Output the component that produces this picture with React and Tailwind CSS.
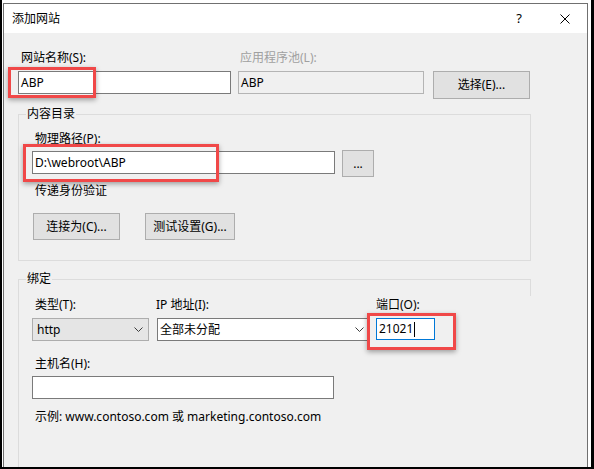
import React from 'react';

const FONT = "font-['Noto_Sans','Noto_Sans_CJK_SC',sans-serif]";

function Label({ children, className = '', muted = false }) {
  return (
    <div className={`h-4 leading-4 text-[12px] whitespace-nowrap ${muted ? 'text-[#a0a0a0]' : 'text-black'} ${className}`}>
      {children}
    </div>
  );
}

function TextBox({ value, className = '' }) {
  return (
    <div className={`flex items-center border border-[#7a7a7a] bg-white pl-[2px] text-[12px] text-black whitespace-nowrap ${className}`}>
      {value}
    </div>
  );
}

function Button({ children, className = '' }) {
  return (
    <div className={`flex items-center justify-center border border-[#adadad] bg-[#e1e1e1] text-[12px] text-black whitespace-nowrap ${className}`}>
      {children}
    </div>
  );
}

function Chevron() {
  return (
    <svg width="9" height="5" viewBox="0 0 9 5" className="shrink-0">
      <path d="M0.5 0.5 L4.5 4.5 L8.5 0.5" fill="none" stroke="#3c3c3c" strokeWidth="1" />
    </svg>
  );
}

function Select({ value, className = '' }) {
  return (
    <div className={`flex items-center justify-between text-[12px] text-black whitespace-nowrap ${className}`}>
      <span>{value}</span>
      <Chevron />
    </div>
  );
}

function Highlight({ className }) {
  return (
    <div className={`absolute border-[3px] border-[#f04848] shadow-[0_2px_5px_rgba(0,0,0,0.35)] pointer-events-none ${className}`} />
  );
}

function GroupTitle({ children }) {
  return (
    <span className="absolute -top-[9px] left-[7px] bg-[#f0f0f0] px-px text-[12px] leading-4 text-black">
      {children}
    </span>
  );
}

export default function App() {
  return (
    <div className={`relative w-[594px] h-[469px] overflow-hidden bg-white border-l-2 border-r-[3px] border-b-2 border-black ${FONT}`}>
      {/* dialog */}
      <div className="ml-px mt-[3px] w-[585px] h-[470px] flex flex-col border-t border-l border-r border-[#707070] bg-[#f0f0f0]">
        {/* title bar */}
        <div className="h-[29px] shrink-0 flex items-center bg-white pl-[8px] pr-[17px]">
          <span className="flex-1 text-[12px] text-black">添加网站</span>
          <span className="text-[13px] text-black leading-none">?</span>
          <svg width="10" height="10" viewBox="0 0 10 10" className="ml-[38px]">
            <path d="M0.5 0.5 L9.5 9.5 M9.5 0.5 L0.5 9.5" stroke="#000" strokeWidth="1" />
          </svg>
        </div>

        {/* content */}
        <div className="flex-1 pl-[14px] pt-[17px]">
          {/* site name row */}
          <div className="flex items-start">
            <div className="w-[213px]">
              <Label className="ml-[3px] mb-[5px]">网站名称(S):</Label>
              <TextBox value="ABP" className="h-[23px]" />
            </div>
            <div className="w-[186px] ml-[7px]">
              <Label muted className="ml-[2px] mb-[5px]">应用程序池(L):</Label>
              <div className="h-[23px] flex items-center border border-[#b4b4b4] bg-[#f0f0f0] pl-[2px] text-[12px] text-black">ABP</div>
            </div>
            <Button className="ml-[9px] mt-[21px] w-[97px] h-[28px]">选择(E)...</Button>
          </div>

          {/* content directory */}
          <div className="relative mt-[15px] w-[513px] h-[147px] border border-[#dcdcdc] pl-[13px] pt-[16px]">
            <GroupTitle>内容目录</GroupTitle>
            <Label className="ml-[3px] mb-[4px]">物理路径(P):</Label>
            <div className="flex items-start">
              <TextBox value="D:\webroot\ABP" className="w-[303px] h-[23px]" />
              <Button className="ml-[7px] -mt-px w-[32px] h-[27px]">...</Button>
            </div>
            <Label className="ml-[3px] mt-[6px]">传递身份验证</Label>
            <div className="flex mt-[14px] ml-px">
              <Button className="w-[87px] h-[27px]">连接为(C)...</Button>
              <Button className="ml-[25px] w-[90px] h-[27px]">测试设置(G)...</Button>
            </div>
          </div>

          {/* bindings */}
          <div className="relative mt-[18px] w-[513px] h-[200px] border-t border-l border-[#dcdcdc] pl-[13px] pt-[17px]">
            <GroupTitle>绑定</GroupTitle>
            <div className="absolute right-0 top-0 w-px h-[16px] bg-[#dcdcdc]" />
            <div className="flex items-start">
              <div className="w-[117px]">
                <Label className="ml-[3px] mb-[5px]">类型(T):</Label>
                <Select value="http" className="h-[23px] border border-[#adadad] bg-[#e5e5e5] pl-[4px] pr-[5px]" />
              </div>
              <div className="w-[211px] ml-[8px]">
                <Label className="-ml-px mb-[5px]">IP 地址(I):</Label>
                <Select value="全部未分配" className="h-[23px] border border-[#7a7a7a] bg-white pl-[2px] pr-[3px]" />
              </div>
              <div className="w-[59px] ml-[8px]">
                <Label className="mb-[5px]">端口(O):</Label>
                <div className="h-[22px] flex items-center border border-[#0078d7] bg-white pl-[2px] text-[12px] text-black">
                  21021<span className="ml-px w-px h-[15px] bg-black" />
                </div>
              </div>
            </div>
            <Label className="ml-[3px] mt-[15px]">主机名(H):</Label>
            <TextBox value="" className="mt-[4px] w-[302px] h-[23px]" />
            <Label className="ml-[3px] mt-[10px]">示例: www.contoso.com 或 marketing.contoso.com</Label>
          </div>
        </div>
      </div>

      {/* screenshot annotations */}
      <Highlight className="left-[6px] top-[67px] w-[88px] h-[31px]" />
      <Highlight className="left-[21px] top-[144px] w-[196px] h-[38px]" />
      <Highlight className="left-[365px] top-[313px] w-[89px] h-[37px]" />
    </div>
  );
}
